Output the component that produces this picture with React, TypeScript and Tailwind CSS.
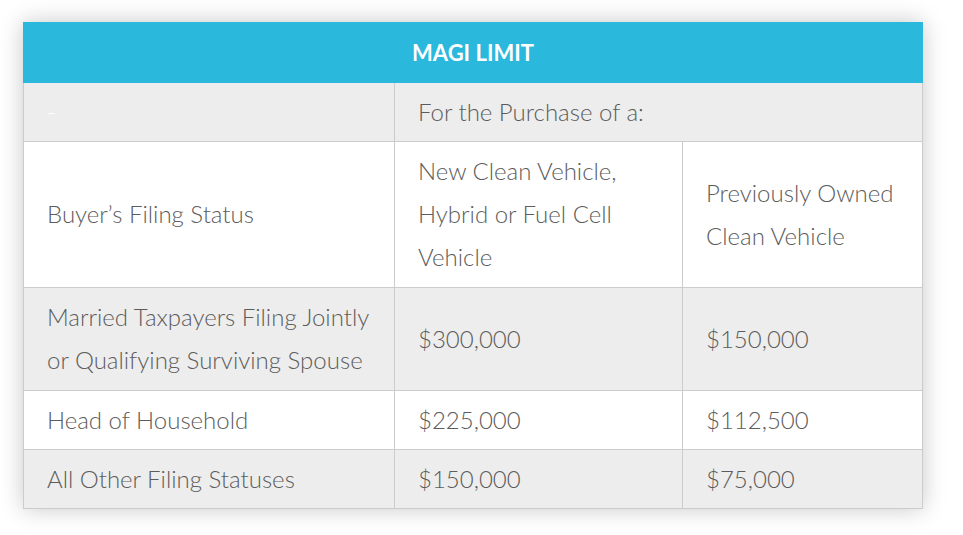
const rows = [
  { status: ['Married Taxpayers Filing Jointly', 'or Qualifying Surviving Spouse'], fresh: '$300,000', used: '$150,000', shade: true, h: 'h-[103px]' },
  { status: ['Head of Household'], fresh: '$225,000', used: '$112,500', shade: false, h: 'h-[59px]' },
  { status: ['All Other Filing Statuses'], fresh: '$150,000', used: '$75,000', shade: true, h: 'h-[59px]' },
];

const cell = 'border border-[#cccccc] pl-[23px] pr-6 pt-[6.5px] pb-[8.5px] align-middle whitespace-nowrap';

const App = () => {
  return (
    <div className="min-h-screen bg-white pt-[22px] pl-[23px]" style={{ width: 963, height: 535 }}>
      <table
        className="w-[899px] table-fixed border-collapse text-left text-[24px] font-light leading-[43px] text-[#5c5c5c] shadow-[0_0_22px_rgba(0,0,0,0.22)]"
        style={{ fontFamily: 'Lato, "Open Sans", sans-serif' }}
      >
        <colgroup>
          <col className="w-[371px]" />
          <col className="w-[288px]" />
          <col className="w-[240px]" />
        </colgroup>
        <thead>
          <tr className="h-[60px] bg-[#2bb8dd]">
            <th colSpan={3} className="border border-[#2bb8dd] text-center text-[22px] font-bold text-white">
              MAGI LIMIT
            </th>
          </tr>
        </thead>
        <tbody>
          <tr className="h-[59px] bg-[#ededed]">
            <td className={`${cell} text-white`}>-</td>
            <td colSpan={2} className={cell}>For the Purchase of a:</td>
          </tr>
          <tr className="h-[146px] bg-white">
            <td className={cell}>Buyer’s Filing Status</td>
            <td className={cell}>
              New Clean Vehicle,
              <br />
              Hybrid or Fuel Cell
              <br />
              Vehicle
            </td>
            <td className={cell}>
              Previously Owned
              <br />
              Clean Vehicle
            </td>
          </tr>
          {rows.map((r) => (
            <tr key={r.fresh + r.used} className={`${r.h} ${r.shade ? 'bg-[#ededed]' : 'bg-white'}`}>
              <td className={cell}>
                {r.status.map((line, i) => (
                  <span key={line}>
                    {i > 0 && <br />}
                    {line}
                  </span>
                ))}
              </td>
              <td className={cell}>{r.fresh}</td>
              <td className={cell}>{r.used}</td>
            </tr>
          ))}
        </tbody>
      </table>
    </div>
  );
};

export default App;
